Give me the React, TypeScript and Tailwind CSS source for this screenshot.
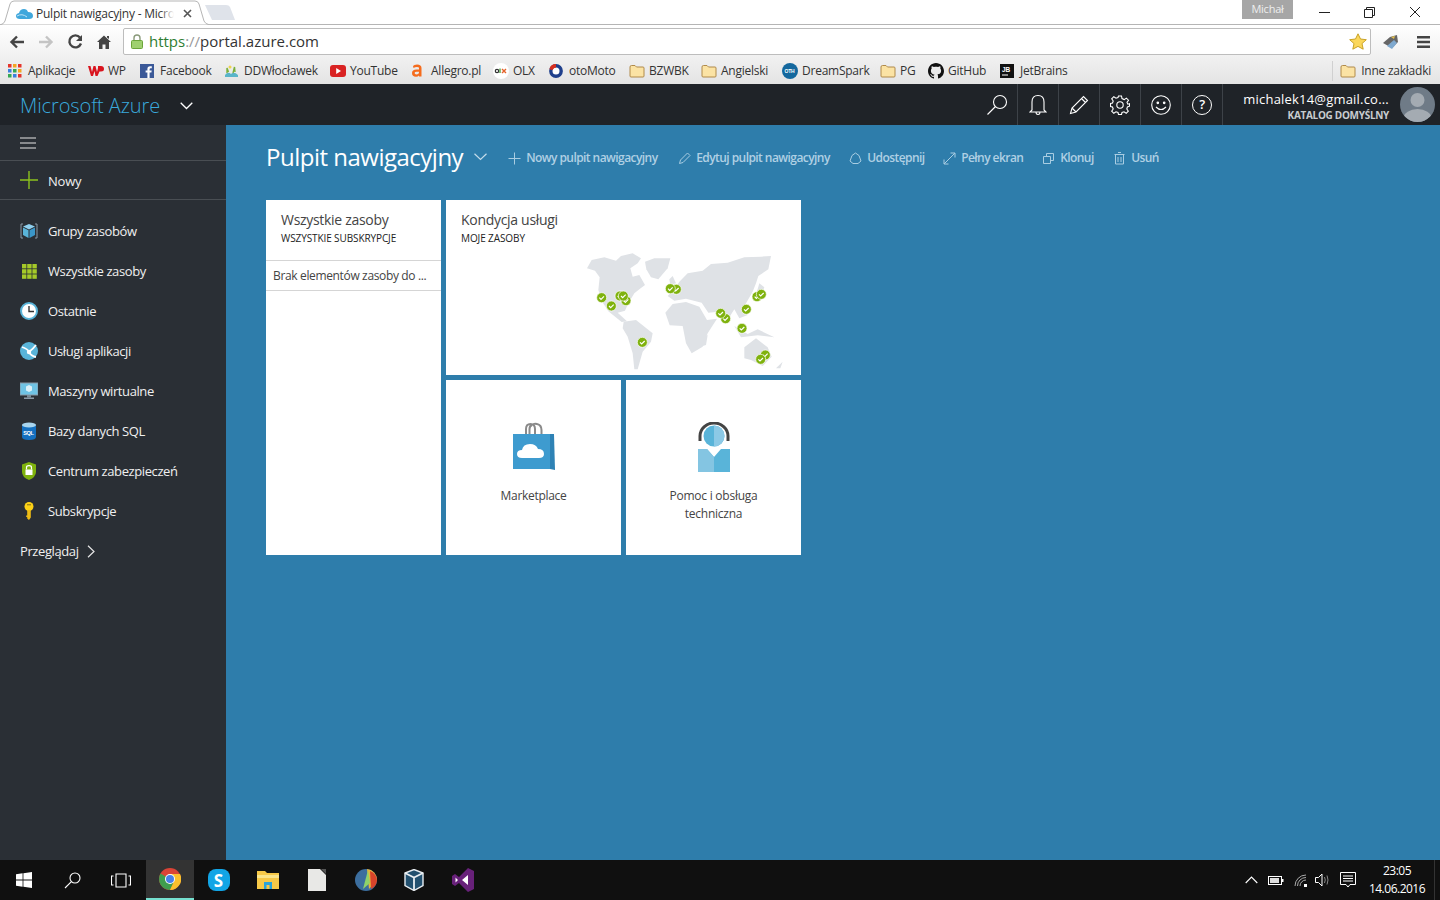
import React from "react";

const Folder = () => (
  <svg width="16" height="14" viewBox="0 0 16 14">
    <path d="M1 3 Q1 1.5 2.5 1.5 H6 L7.5 3 H14 Q15 3 15 4 V12 Q15 13 14 13 H2 Q1 13 1 12 Z" fill="#fbe3a4" stroke="#b08a4a" />
  </svg>
);

const AppsIcon = () => (
  <svg width="14" height="14" viewBox="0 0 14 14">
    {[
      [0, 0, "#e5352c"], [5, 0, "#f5a623"], [10, 0, "#e5352c"],
      [0, 5, "#3a7fe0"], [5, 5, "#34a853"], [10, 5, "#f5a623"],
      [0, 10, "#34a853"], [5, 10, "#3a7fe0"], [10, 10, "#e5352c"],
    ].map(([x, y, c]) => <rect key={`${x}-${y}`} x={x as number} y={y as number} width="3.5" height="3.5" fill={c as string} />)}
  </svg>
);

const bookmarks = [
  { label: "Aplikacje", w: "w-[80px]", icon: <AppsIcon /> },
  { label: "WP", w: "w-[52px]", icon: <svg width="16" height="12" viewBox="0 0 16 12"><path d="M0 1 L2.5 1 L4 7 L5.5 1 L7.5 1 L9 7 L10 3 L10 1 L13 1 Q16 1 16 4 Q16 6.5 13 6.5 L11.5 6.5 L9.5 11 L7.5 11 L6.5 6 L5 11 L3 11 Z" fill="#d9141e" /></svg> },
  { label: "Facebook", w: "w-[84px]", icon: <svg width="14" height="14" viewBox="0 0 14 14"><rect width="14" height="14" fill="#3b5998" /><path d="M9.6 14 V8.6 H11.4 L11.7 6.5 H9.6 V5.2 Q9.6 4.2 10.6 4.2 H11.8 V2.3 Q11 2.2 10.1 2.2 Q7.4 2.2 7.4 4.9 V6.5 H5.6 V8.6 H7.4 V14 Z" fill="#fff" /></svg> },
  { label: "DDWłocławek", w: "w-[106px]", icon: <svg width="15" height="14" viewBox="0 0 15 14"><path d="M1 11 Q4 7 7 10 Q10 7 14 11 L14 13 L1 13 Z" fill="#5ab5c9" /><path d="M3 9 L3 4 L4.5 8 M9 9 L10.5 3 L11 8" stroke="#7bb03a" strokeWidth="1.4" fill="none" /><circle cx="6" cy="3" r="1.5" fill="#f0d34a" /></svg> },
  { label: "YouTube", w: "w-[81px]", icon: <svg width="16" height="12" viewBox="0 0 16 12"><rect width="16" height="12" rx="3" fill="#d92323" /><path d="M6.2 3 L11 6 L6.2 9 Z" fill="#fff" /></svg> },
  { label: "Allegro.pl", w: "w-[82px]", icon: <svg width="12" height="15" viewBox="0 0 12 15"><path d="M2 3 Q3 1.5 6 1.5 Q10.5 1.5 10.5 5 V13.5 H8 V12.5 Q7 13.8 5 13.8 Q1 13.8 1 10 Q1 6.5 5.5 6.5 H8 V5 Q8 4 6 4 Q4 4 2.5 5 Z M8 8.8 H5.6 Q3.6 8.8 3.6 10 Q3.6 11.4 5.3 11.4 Q8 11.4 8 9.5 Z" fill="#f56c1d" /></svg> },
  { label: "OLX", w: "w-[56px]", icon: <svg width="16" height="16" viewBox="0 0 16 16"><circle cx="8" cy="8" r="8" fill="#fff" /><circle cx="4" cy="8" r="1.7" fill="none" stroke="#333" strokeWidth="1.2" /><path d="M7 5.5 V10" stroke="#4a9e3b" strokeWidth="1.3" /><path d="M9 6 L13 10 M13 6 L9 10" stroke="#e5622a" strokeWidth="1.4" /></svg> },
  { label: "otoMoto", w: "w-[80px]", icon: <svg width="14" height="14" viewBox="0 0 14 14"><circle cx="7" cy="7" r="5.2" fill="#fff" stroke="#20408c" strokeWidth="3.4" /><path d="M7 1.8 A5.2 5.2 0 0 0 2 5.6" fill="none" stroke="#d8301f" strokeWidth="3.4" /></svg> },
  { label: "BZWBK", w: "w-[72px]", icon: <Folder /> },
  { label: "Angielski", w: "w-[81px]", icon: <Folder /> },
  { label: "DreamSpark", w: "w-[98px]", icon: <svg width="16" height="16" viewBox="0 0 16 16"><circle cx="8" cy="8" r="8" fill="#14689e" /><text x="2.6" y="9.8" fontSize="5" fontWeight="700" fill="#fff" fontFamily="Liberation Sans">OTH</text></svg> },
  { label: "PG", w: "w-[48px]", icon: <Folder /> },
  { label: "GitHub", w: "w-[72px]", icon: <svg width="16" height="16" viewBox="0 0 16 16"><path fill="#111" d="M8 0C3.6 0 0 3.6 0 8c0 3.5 2.3 6.5 5.5 7.6.4.1.5-.2.5-.4v-1.4c-2.2.5-2.7-1-2.7-1-.4-.9-.9-1.2-.9-1.2-.7-.5.1-.5.1-.5.8.1 1.2.8 1.2.8.7 1.2 1.9.9 2.3.7.1-.5.3-.9.5-1.1-1.8-.2-3.6-.9-3.6-4 0-.9.3-1.6.8-2.1-.1-.2-.4-1 .1-2.1 0 0 .7-.2 2.2.8.6-.2 1.3-.3 2-.3s1.4.1 2 .3c1.5-1 2.2-.8 2.2-.8.4 1.1.2 1.9.1 2.1.5.6.8 1.3.8 2.1 0 3.1-1.9 3.7-3.7 3.9.3.3.6.8.6 1.5v2.2c0 .2.1.5.6.4C13.7 14.5 16 11.5 16 8c0-4.4-3.6-8-8-8z" /></svg> },
  { label: "JetBrains", w: "w-[90px]", icon: <svg width="14" height="14" viewBox="0 0 14 14"><rect width="14" height="14" fill="#111" /><text x="2" y="8" fontSize="6.5" fontWeight="700" fill="#fff" fontFamily="Liberation Sans">JB</text><rect x="2" y="10.5" width="6" height="1" fill="#fff" /></svg> },
];

const Check = ({ x, y }: { x: number; y: number }) => (
  <g>
    <circle cx={x} cy={y} r="15" fill="#7fb20e" stroke="#fff" strokeWidth="2" />
    <path d={`M${x - 7} ${y} L${x - 2} ${y + 5} L${x + 7} ${y - 4}`} fill="none" stroke="#fff" strokeWidth="3.5" />
  </g>
);

const pins: [number, number][] = [
  [92, 173], [121, 198], [147, 168], [165, 182], [157, 168], [316, 148], [298, 146],
  [464, 236], [449, 220], [513, 265], [526, 208], [558, 170], [571, 163], [214, 307], [583, 345], [569, 358],
];

const WorldMap = () => (
  <svg width="230" height="135" viewBox="0 0 690 405" className="self-end">
    <g fill="#dfe2e6">
      {/* north america */}
      <path d="M48 85 L62 60 L100 52 L135 62 L150 48 L185 40 L210 55 L200 70 L178 85 L185 110 L205 105 L222 135 L205 148 L190 160 L172 190 L162 212 L140 218 L168 244 L152 246 L112 214 L94 186 L82 150 L86 112 L72 92 Z" />
      {/* greenland */}
      <path d="M222 65 L250 55 L298 55 L290 85 L262 118 L240 112 L226 88 Z" />
      {/* south america */}
      <path d="M158 245 L195 240 L245 280 L240 305 L215 335 L200 388 L190 388 L185 340 L170 290 L155 265 Z" />
      {/* africa */}
      <path d="M283 218 L305 192 L345 186 L385 200 L408 240 L438 236 L410 280 L395 320 L362 340 L345 310 L335 258 L296 256 Z" />
      {/* eurasia */}
      <path d="M290 168 L308 150 L325 125 L350 100 L395 92 L420 72 L470 68 L520 52 L570 50 L600 48 L592 88 L562 108 L555 130 L545 155 L522 195 L530 225 L505 235 L490 208 L462 252 L442 215 L412 218 L392 188 L345 176 L310 182 Z" />
      <path d="M520 322 L555 295 L590 322 L602 350 L575 378 L540 360 L520 355 Z" />
      <path d="M400 290 L410 285 L405 315 L395 318 Z" />
      <path d="M490 258 L530 282 L560 268 L610 292 L560 286 L510 292 Z" />
      <path d="M565 130 L580 142 L565 180 L552 175 Z" />
      <path d="M295 118 L305 108 L315 130 L298 135 Z" />
      <path d="M615 385 L635 365 L628 385 Z" />
    </g>
    {pins.map(([x, y]) => <Check key={`${x}-${y}`} x={x} y={y} />)}
  </svg>
);

const cmdIcon = { fill: "none", stroke: "#a9cde2", strokeWidth: 1 } as const;

const commands = [
  { label: "Nowy pulpit nawigacyjny", w: "w-[170px]", icon: <path d="M6.5 0.5 V12.5 M0.5 6.5 H12.5" /> },
  { label: "Edytuj pulpit nawigacyjny", w: "w-[171px]", icon: <path d="M1.5 11.5 L2.5 8 L9.5 1 L12 3.5 L5 10.5 Z" /> },
  { label: "Udostępnij", w: "w-[94px]", icon: <path d="M6.5 1 L10 3.5 L12 9 L9 11.5 H4 L1 9 L3 3.5 Z" /> },
  { label: "Pełny ekran", w: "w-[99px]", icon: <path d="M1 12 L12 1 M7.5 1 H12 V5.5 M1 7.5 V12 H5.5" /> },
  { label: "Klonuj", w: "w-[71px]", icon: <path d="M1.5 4.5 H8.5 V11.5 H1.5 Z M4.5 4.5 V1.5 H11.5 V8.5 H8.5" /> },
  { label: "Usuń", w: "w-[50px]", icon: <path d="M2.5 2.5 H10.5 V12 H2.5 Z M1.5 2.5 H11.5 M5 0.5 H8 M5 5 V10 M8 5 V10" /> },
];

const menu = [
  {
    label: "Grupy zasobów",
    icon: (
      <svg width="18" height="16" viewBox="0 0 18 16">
        <path d="M3 1 H1 V15 H3 M15 1 H17 V15 H15" fill="none" stroke="#8a99a6" />
        <path d="M9 1 L15 3.5 L9 6.5 L3 3.5 Z" fill="#8fd0ef" />
        <path d="M3 4.5 L8.5 7.2 V15 L3 12 Z" fill="#59b4d9" />
        <path d="M15 4.5 L9.5 7.2 V15 L15 12 Z" fill="#3a96c8" />
      </svg>
    ),
  },
  {
    label: "Wszystkie zasoby",
    icon: (
      <svg width="15" height="15" viewBox="0 0 15 15" fill="#a5c929">
        {[0, 5.2, 10.4].flatMap((y) => [0, 5.2, 10.4].map((x) => <rect key={`${x}-${y}`} x={x} y={y} width="4.4" height="4.4" />))}
      </svg>
    ),
  },
  {
    label: "Ostatnie",
    icon: (
      <svg width="18" height="18" viewBox="0 0 18 18">
        <circle cx="9" cy="9" r="8" fill="#fff" stroke="#59b4d9" strokeWidth="2" />
        <path d="M9 4 V9.5 H14" fill="none" stroke="#333" strokeWidth="1.4" />
      </svg>
    ),
  },
  {
    label: "Usługi aplikacji",
    icon: (
      <svg width="18" height="18" viewBox="0 0 18 18">
        <circle cx="9" cy="9" r="9" fill="#59b4d9" />
        <path d="M2 5 Q8 7 9 10 Q11 14 16 15 M9 10 Q13 7 16 3" fill="none" stroke="#fff" strokeWidth="1.8" />
        <circle cx="9" cy="10" r="2.2" fill="#fff" />
      </svg>
    ),
  },
  {
    label: "Maszyny wirtualne",
    icon: (
      <svg width="18" height="18" viewBox="0 0 18 18">
        <rect x="0" y="1" width="18" height="12" fill="#6fc3e4" stroke="#8a99a6" />
        <path d="M9 3 L12 4.5 V8.5 L9 10 L6 8.5 V4.5 Z" fill="#fff" opacity="0.75" />
        <rect x="7" y="13" width="4" height="2.5" fill="#7a8a96" />
        <rect x="4" y="15.5" width="10" height="1.5" fill="#8a99a6" />
      </svg>
    ),
  },
  {
    label: "Bazy danych SQL",
    icon: (
      <svg width="14" height="18" viewBox="0 0 14 18">
        <path d="M0 3 V15 Q0 18 7 18 Q14 18 14 15 V3 Z" fill="#1470c0" />
        <ellipse cx="7" cy="3" rx="7" ry="2.6" fill="#a8d5ee" />
        <text x="1.2" y="12.5" fontSize="5.6" fontWeight="700" fill="#fff" fontFamily="Liberation Sans">SQL</text>
      </svg>
    ),
  },
  {
    label: "Centrum zabezpieczeń",
    icon: (
      <svg width="14" height="18" viewBox="0 0 14 18">
        <path d="M7 0 L14 2.5 V10 Q14 15 7 18 Q0 15 0 10 V2.5 Z" fill="#7fb20e" />
        <path d="M4.5 7.5 V5.5 Q4.5 3.7 7 3.7 Q9.5 3.7 9.5 5.5 V7.5" fill="none" stroke="#fff" strokeWidth="1.2" />
        <rect x="3.5" y="7.5" width="7" height="5.5" fill="#fff" />
      </svg>
    ),
  },
  {
    label: "Subskrypcje",
    icon: (
      <svg width="12" height="18" viewBox="0 0 12 18">
        <circle cx="6" cy="4.5" r="4.5" fill="#fcd116" />
        <path d="M4.2 8 H7.8 V15.5 L6 18 L4.2 16.5 V15 H3.2 V13.5 H4.2 Z" fill="#eebc14" />
        <rect x="4" y="2" width="4" height="1.4" fill="#a58a14" />
      </svg>
    ),
  },
];

const HeaderCell = ({ children }: { children: React.ReactNode }) => (
  <div className="flex h-full w-[41px] items-center justify-center border-r border-[#3d4248]">{children}</div>
);

const hdr = { fill: "none", stroke: "#fff", strokeWidth: 1.1 } as const;

const TaskCell = ({ children, width, active }: { children: React.ReactNode; width: string; active?: boolean }) => (
  <div className={`flex h-full items-center justify-center ${width} ${active ? "border-b-2 border-[#76e0d0] bg-[#333333]" : ""}`}>{children}</div>
);

export default function App() {
  return (
    <div className="flex h-[900px] w-[1440px] flex-col overflow-hidden bg-white font-['Open_Sans',sans-serif] text-[12px] tracking-[-0.02em]">
      {/* tab strip */}
      <div className="relative flex h-[25px] shrink-0 items-start justify-between border-b border-[#b5b5b5] bg-white">
        <div className="relative flex h-[25px] w-[236px]">
          <svg width="236" height="25" viewBox="0 0 236 25" className="absolute left-0 top-0">
            <path d="M205 5 H226 Q229 5 230 7 L235 20 H212 Z" fill="#dfe3ea" />
            <path d="M0 25 Q4 24 5 21 L10 4 Q11 1 14 1 H195 Q198 1 199 4 L204 21 Q205 24 210 25 Z" fill="#fff" stroke="#b5b5b5" />
          </svg>
          <div className="relative flex h-full w-full items-center pl-[16px] pt-[2px]">
            <svg width="17" height="12" viewBox="0 0 17 12" className="mr-[3px] shrink-0">
              <path d="M4 11 Q0 11 0 8 Q0 5.5 3 5 Q4 1 8 1 Q11 1 12 4 Q17 4 17 8 Q17 11 13 11 Z" fill="#3fa7dc" />
              <path d="M1 8 Q6 5 11 9" fill="none" stroke="#bfe3f5" />
            </svg>
            <span className="relative w-[138px] overflow-hidden whitespace-nowrap text-[#333]">
              Pulpit nawigacyjny - Micro
              <span className="absolute right-0 top-0 h-full w-[14px] bg-gradient-to-r from-transparent to-white" />
            </span>
            <svg width="9" height="9" viewBox="0 0 9 9" className="ml-[9px]">
              <path d="M1 1 L8 8 M8 1 L1 8" stroke="#555" strokeWidth="1.6" />
            </svg>
          </div>
        </div>
        <div className="flex items-start">
          <div className="mr-[8px] flex h-[19px] w-[51px] items-center justify-center bg-[#a6a6a6] text-[11px] text-[#eeeeee]">Michał</div>
          <div className="flex h-[24px] items-center">
            <div className="flex w-[46px] justify-center"><svg width="11" height="11" viewBox="0 0 11 11"><path d="M0 5.5 H11" stroke="#222" /></svg></div>
            <div className="flex w-[45px] justify-center"><svg width="11" height="11" viewBox="0 0 11 11"><path d="M0.5 2.5 H8.5 V10.5 H0.5 Z M2.5 2.5 V0.5 H10.5 V8.5 H8.5" fill="none" stroke="#222" /></svg></div>
            <div className="flex w-[46px] justify-center"><svg width="12" height="12" viewBox="0 0 12 12"><path d="M1 1 L11 11 M11 1 L1 11" stroke="#222" /></svg></div>
            <div className="w-[2px]" />
          </div>
        </div>
      </div>

      {/* toolbar */}
      <div className="flex h-[33px] shrink-0 items-center bg-gradient-to-b from-[#ffffff] to-[#f0f0f0] pl-[9px] pr-[10px]">
        <svg width="16" height="14" viewBox="0 0 16 14" className="mr-[13px]"><path d="M15 7 H3 M8 1.5 L2.5 7 L8 12.5" fill="none" stroke="#444" strokeWidth="2.4" /></svg>
        <svg width="16" height="14" viewBox="0 0 16 14" className="mr-[13px]"><path d="M1 7 H13 M8 1.5 L13.5 7 L8 12.5" fill="none" stroke="#c4c4c4" strokeWidth="2.4" /></svg>
        <svg width="16" height="16" viewBox="0 0 16 16" className="mr-[14px]"><path d="M13 3.5 A6 6 0 1 0 14 9.5" fill="none" stroke="#444" strokeWidth="2.4" /><path d="M15 1 V7 H9 Z" fill="#444" /></svg>
        <svg width="14" height="14" viewBox="0 0 14 14" className="mr-[12px]"><path d="M7 0.5 L14 7 H12 V14 H8.5 V9.5 H5.5 V14 H2 V7 H0 Z M10 1 H12 V4 L10 2.5 Z" fill="#444" /></svg>
        <div className="flex h-[27px] w-[1249px] items-center rounded-[2px] border border-[#bdbdbd] bg-white pl-[7px] pr-[3px]">
          <svg width="12" height="15" viewBox="0 0 12 15" className="mr-[6px]"><path d="M3 7 V4 Q3 1 6 1 Q9 1 9 4 V7" fill="none" stroke="#8a9a7a" strokeWidth="1.4" /><rect x="0.5" y="6.5" width="11" height="8" rx="1" fill="#9fd070" stroke="#6ba43a" /></svg>
          <span className="text-[15px] tracking-normal text-[#333]"><span className="text-[#2e7d32]">https</span><span className="text-[#999]">://</span>portal.azure.com</span>
          <svg width="18" height="17" viewBox="0 0 18 17" className="ml-auto"><path d="M9 0.8 L11.5 6 L17.3 6.7 L13 10.6 L14.2 16.2 L9 13.4 L3.8 16.2 L5 10.6 L0.7 6.7 L6.5 6 Z" fill="#fbd75b" stroke="#c9a227" /></svg>
        </div>
        <svg width="17" height="16" viewBox="0 0 17 16" className="ml-[11px]"><path d="M1 9 L8 3 L15 1 L16 8 L10 14 Z" fill="#666" /><path d="M5 12 L12 6 L15 9 L10 15 Z" fill="#7fa9cf" /><path d="M9 3 L13 2 L12 5 Z" fill="#e6c14d" /></svg>
        <svg width="13" height="12" viewBox="0 0 13 12" className="ml-[18px]"><path d="M0 0 H13 V2.6 H0 Z M0 4.7 H13 V7.3 H0 Z M0 9.4 H13 V12 H0 Z" fill="#444" /></svg>
      </div>

      {/* bookmarks */}
      <div className="flex h-[26px] shrink-0 items-center bg-gradient-to-b from-[#f0f0f0] to-[#e4e4e4] pb-[1px] pl-[8px] text-[#333]">
        {bookmarks.map((b) => (
          <div key={b.label} className={`flex shrink-0 items-center ${b.w}`}>
            <div className="flex w-[20px] shrink-0 items-center justify-start">{b.icon}</div>
            <span className="whitespace-nowrap">{b.label}</span>
          </div>
        ))}
        <div className="ml-auto flex h-[20px] items-center border-l border-[#d0d0d0] pl-[7px] pr-[9px]">
          <div className="mr-[5px]"><Folder /></div>
          <span className="whitespace-nowrap">Inne zakładki</span>
        </div>
      </div>

      {/* azure header */}
      <div className="flex h-[41px] shrink-0 items-center justify-between bg-[#1f2328]">
        <div className="flex items-center pl-[20px] pt-[2px]">
          <span className="w-[160px] text-[20px] font-light tracking-[-0.1px] text-[#3aa9dc]">Microsoft Azure</span>
          <svg width="13" height="8" viewBox="0 0 13 8"><path d="M0.7 0.7 L6.5 6.5 L12.3 0.7" fill="none" stroke="#fff" strokeWidth="1.3" /></svg>
        </div>
        <div className="flex h-full items-center">
          <HeaderCell>
            <svg width="22" height="22" viewBox="0 0 22 22" {...hdr}><circle cx="14" cy="8" r="6.5" /><path d="M9.5 12.5 L1.5 20.5" /></svg>
          </HeaderCell>
          <HeaderCell>
            <svg width="18" height="22" viewBox="0 0 18 22" {...hdr}><path d="M3 16 V8 Q3 1.5 9 1.5 Q15 1.5 15 8 V16 L17 18 H1 Z M7 18 Q7 20.5 9 20.5 Q11 20.5 11 18" /></svg>
          </HeaderCell>
          <HeaderCell>
            <svg width="20" height="20" viewBox="0 0 20 20" {...hdr}><path d="M1.5 18.5 L3 13 L14.5 1.5 L18.5 5.5 L7 17 Z M12.5 3.5 L16.5 7.5 M3 13 L7 17" /></svg>
          </HeaderCell>
          <HeaderCell>
            <svg width="20" height="20" viewBox="0 0 20 20" {...hdr}><circle cx="10" cy="10" r="3.2" /><path d="M8.5 1 H11.5 L12 3.6 L14.2 4.6 L16.4 3.1 L18.5 5.2 L17 7.4 L17.8 9.2 L19.5 8.8 V11.2 L17.4 12 L16.8 14 L18.3 16.2 L16.2 18.3 L14 16.8 L12 17.5 L11.5 19.5 H8.5 L8 17.5 L6 16.8 L3.8 18.3 L1.7 16.2 L3.2 14 L2.5 12 L0.5 11.5 V8.5 L2.5 8 L3.2 6 L1.7 3.8 L3.8 1.7 L6 3.2 L8 2.5 Z" /></svg>
          </HeaderCell>
          <HeaderCell>
            <svg width="20" height="20" viewBox="0 0 20 20" {...hdr}><circle cx="10" cy="10" r="9.3" /><circle cx="6.8" cy="7.8" r="0.8" fill="#fff" /><circle cx="13.2" cy="7.8" r="0.8" fill="#fff" /><path d="M5 12 Q10 17 15 12" /></svg>
          </HeaderCell>
          <HeaderCell>
            <div className="flex h-[20px] w-[20px] items-center justify-center rounded-full border border-white text-[13px] font-semibold leading-none text-white">?</div>
          </HeaderCell>
          <div className="flex h-full w-[217px] items-center justify-end pr-[5px]">
            <div className="mr-[11px] flex flex-col items-end pt-[4px]">
              <span className="text-[13px] leading-[16px] tracking-[0.2px] text-white">michalek14@gmail.co...</span>
              <span className="text-[10px] font-bold leading-[16px] tracking-[-0.3px] text-[#c8ccd0]">KATALOG DOMYŚLNY</span>
            </div>
            <svg width="35" height="35" viewBox="0 0 35 35">
              <clipPath id="avatar"><circle cx="17.5" cy="17.5" r="17.5" /></clipPath>
              <g clipPath="url(#avatar)">
                <rect width="35" height="35" fill="#6f7b87" />
                <circle cx="17.5" cy="13" r="7" fill="#a4abb2" />
                <ellipse cx="17.5" cy="31" rx="14" ry="9" fill="#a4abb2" />
              </g>
            </svg>
          </div>
        </div>
      </div>

      {/* portal body */}
      <div className="flex min-h-0 flex-1">
        <aside className="flex w-[226px] shrink-0 flex-col bg-[#2a2f35] text-[13px] tracking-[-0.4px] text-[#f0f0f0]">
          <div className="flex h-[36px] items-center border-b border-[#494e53] pl-[20px]">
            <svg width="16" height="12" viewBox="0 0 16 12"><path d="M0 1 H16 M0 6 H16 M0 11 H16" stroke="#e6e6e6" /></svg>
          </div>
          <div className="flex h-[39px] items-center border-b border-[#494e53] pl-[20px]">
            <svg width="18" height="18" viewBox="0 0 18 18" className="mr-[10px]"><path d="M9 0 V18 M0 9 H18" stroke="#8cc21e" strokeWidth="1.4" /></svg>
            <span className="pt-[4px] tracking-[-0.2px]">Nowy</span>
          </div>
          <nav className="flex flex-col pt-[11px]">
            {menu.map((m) => (
              <div key={m.label} className="flex h-[40px] items-center">
                <div className="flex w-[48px] shrink-0 items-center justify-center pl-[10px]">{m.icon}</div>
                <span className="whitespace-nowrap pt-[2px]">{m.label}</span>
              </div>
            ))}
            <div className="flex h-[40px] items-center pl-[20px]">
              <span className="pt-[2px]">Przeglądaj</span>
              <svg width="8" height="13" viewBox="0 0 8 13" className="ml-[8px] mt-[1px]"><path d="M1 0.7 L7 6.5 L1 12.3" fill="none" stroke="#e6e6e6" strokeWidth="1.2" /></svg>
            </div>
          </nav>
        </aside>

        <main className="min-w-0 flex-1 bg-[#2e7dab] pl-[40px]">
          <div className="flex h-[75px] items-start pt-[14px]">
            <h1 className="text-[24px] font-normal leading-[36px] tracking-[-0.5px] text-white">Pulpit nawigacyjny</h1>
            <svg width="13" height="8" viewBox="0 0 13 8" className="ml-[11px] mt-[14px]"><path d="M0.5 0.7 L6.5 6.5 L12.5 0.7" fill="none" stroke="#c4dcea" strokeWidth="1.2" /></svg>
            <div className="ml-[21px] flex h-[37px] items-center pt-[1px]">
              {commands.map((c) => (
                <div key={c.label} className={`flex shrink-0 items-center ${c.w}`}>
                  <svg width="13" height="13" viewBox="0 0 13 13" {...cmdIcon} className="mr-[5px] shrink-0">{c.icon}</svg>
                  <span className="whitespace-nowrap font-semibold tracking-[-0.56px] text-[#b0d0e4]">{c.label}</span>
                </div>
              ))}
            </div>
          </div>

          <div className="grid grid-cols-[175px_175px_175px] grid-rows-[175px_175px] gap-[5px] text-[#444]">
            <section className="row-span-2 flex flex-col bg-white">
              <div className="flex h-[61px] flex-col border-b border-[#d5d5d5] pl-[15px] pt-[11px]">
                <span className="text-[14px] leading-[18px] tracking-[-0.3px]">Wszystkie zasoby</span>
                <span className="mt-[2px] text-[10px] font-medium leading-[14px] tracking-[-0.1px] text-[#222]">WSZYSTKIE SUBSKRYPCJE</span>
              </div>
              <div className="flex h-[30px] items-center border-b border-[#d5d5d5] pl-[7px] text-[12px] tracking-[-0.35px]">Brak elementów zasoby do ...</div>
            </section>
            <section className="col-span-2 flex flex-col bg-white">
              <div className="flex h-[40px] flex-col pl-[15px] pt-[11px]">
                <span className="text-[14px] leading-[18px] tracking-[-0.3px]">Kondycja usługi</span>
                <span className="mt-[2px] text-[10px] font-medium leading-[14px] tracking-[-0.1px] text-[#222]">MOJE ZASOBY</span>
              </div>
              <WorldMap />
            </section>
            <section className="flex flex-col items-center bg-white pt-[42px]">
              <svg width="44" height="50" viewBox="0 0 44 50">
                <path d="M14 16 V7 Q14 2 18.5 2 Q23 2 23 7 V16 M20 3 Q22 1 25 2 Q29.5 3 29.5 8 V16 M17.5 16 V7 Q17.5 4 20 3" fill="none" stroke="#8a8a8a" strokeWidth="2" />
                <path d="M1 12 H38 L38 47 L1 47 Z" fill="#3e9bcf" />
                <path d="M38 12 L42 12 L43 48 L38 47 Z" fill="#2e82b5" />
                <path d="M10 36 Q5 36 5 32 Q5 28 10 28 Q11 22 18 22 Q24 22 26 27 Q32 27 32 32 Q32 36 27 36 Z" fill="#fff" />
              </svg>
              <span className="mt-[15px] text-[12px] leading-[18px] tracking-[-0.3px]">Marketplace</span>
            </section>
            <section className="flex flex-col items-center bg-white pt-[42px] text-center">
              <svg width="34" height="50" viewBox="0 0 34 50">
                <path d="M3 19 V14 A14 13 0 0 1 31 14 V19" fill="none" stroke="#444" strokeWidth="3" />
                <circle cx="17" cy="14" r="10.5" fill="#59b4d9" />
                <path d="M17 3.5 A10.5 10.5 0 0 1 17 24.5 Z" fill="#8cc9e6" />
                <path d="M1 27 H10 L17 35 L24 27 H33 V50 H1 Z" fill="#59b4d9" />
                <path d="M1 27 H10 L17 35 V50 H1 Z" fill="#84c5e2" />
              </svg>
              <span className="mt-[15px] text-[12px] leading-[18px]">Pomoc i obsługa<br />techniczna</span>
            </section>
          </div>
        </main>
      </div>

      {/* taskbar */}
      <div className="flex h-[40px] shrink-0 items-center justify-between bg-[#101010] text-white">
        <div className="flex h-full items-center">
          <TaskCell width="w-[48px]">
            <svg width="16" height="16" viewBox="0 0 16 16" fill="#fff"><path d="M0 2.2 L6.6 1.3 V7.5 H0 Z M7.4 1.2 L16 0 V7.5 H7.4 Z M0 8.4 H6.6 V14.7 L0 13.8 Z M7.4 8.4 H16 V16 L7.4 14.8 Z" /></svg>
          </TaskCell>
          <TaskCell width="w-[48px]">
            <svg width="17" height="17" viewBox="0 0 17 17" fill="none" stroke="#fff" strokeWidth="1.1"><circle cx="11" cy="6" r="5" /><path d="M7.4 9.6 L1 16" /></svg>
          </TaskCell>
          <TaskCell width="w-[50px]">
            <svg width="20" height="15" viewBox="0 0 20 15" fill="none" stroke="#fff" strokeWidth="1.1"><path d="M5 1 H15 V14 H5 Z M2.5 3 H0.5 V12 H2.5 M17.5 3 H19.5 V12 H17.5" /></svg>
          </TaskCell>
          <TaskCell width="w-[48px]" active>
            <svg width="22" height="22" viewBox="0 0 22 22">
              <circle cx="11" cy="11" r="11" fill="#db4437" />
              <path d="M11 11 L1.5 5.5 A11 11 0 0 0 11 22 L16.5 11 Z" fill="#3f9e4e" />
              <path d="M11 6 H21 A11 11 0 0 1 11 22 L16 11 Z" fill="#fbc02d" />
              <circle cx="11" cy="11" r="5" fill="#fff" />
              <circle cx="11" cy="11" r="4" fill="#4a80e8" />
            </svg>
          </TaskCell>
          <TaskCell width="w-[49px]">
            <div className="flex h-[22px] w-[22px] items-center justify-center rounded-[8px] bg-[#12a5e6] text-[17px] font-bold leading-none tracking-normal text-white">S</div>
          </TaskCell>
          <TaskCell width="w-[49px]">
            <svg width="22" height="20" viewBox="0 0 22 20">
              <path d="M0 1 H8 L10 3 H22 V19 H0 Z" fill="#f7c948" />
              <rect x="0" y="5" width="22" height="3" fill="#fbe58a" />
              <path d="M7 12 H15 V19 H12.5 V15 H9.5 V19 H7 Z" fill="#2aa3db" />
            </svg>
          </TaskCell>
          <TaskCell width="w-[49px]">
            <svg width="18" height="22" viewBox="0 0 18 22">
              <path d="M0 0 H12 L18 6 V22 H0 Z" fill="#e8e8e6" />
              <path d="M13 0 L18 5 V0 Z" fill="#555" />
            </svg>
          </TaskCell>
          <TaskCell width="w-[49px]">
            <svg width="22" height="22" viewBox="0 0 22 22">
              <circle cx="11" cy="11" r="11" fill="#3c6e9e" />
              <path d="M12 0 A11 11 0 0 1 22 11 L14 20 Z" fill="#e8b53a" />
              <path d="M15 2 A11 11 0 0 1 22 12 A11 11 0 0 1 16 20 Z" fill="#d8432a" />
              <path d="M8 20 L13 1 L15 14 Z" fill="#8fd16a" />
            </svg>
          </TaskCell>
          <TaskCell width="w-[47px]">
            <svg width="20" height="22" viewBox="0 0 20 22">
              <path d="M10 0.5 L19 4 V16.5 L10 21.5 L1 16.5 V4 Z" fill="#22506f" stroke="#e9eef2" strokeWidth="1.4" />
              <path d="M1 4 L10 8.5 L19 4 M10 8.5 V21" fill="none" stroke="#e9eef2" strokeWidth="1.8" />
            </svg>
          </TaskCell>
          <TaskCell width="w-[51px]">
            <svg width="22" height="24" viewBox="0 0 22 24">
              <path d="M16 0 L22 3 V21 L16 24 L7 15 L3 18 L0 16 V8 L3 6 L7 9 Z" fill="#68217a" />
              <path d="M16 7 L10 12 L16 17 Z M3.5 9.5 V14.5 L6 12 Z" fill="#fff" />
            </svg>
          </TaskCell>
        </div>
        <div className="flex h-full items-center pr-[5px]">
          <svg width="13" height="8" viewBox="0 0 13 8" className="mr-[10px]"><path d="M0.7 7 L6.5 1 L12.3 7" fill="none" stroke="#fff" strokeWidth="1.1" /></svg>
          <svg width="16" height="9" viewBox="0 0 16 9" className="mr-[10px]"><rect x="0.5" y="0.5" width="13" height="8" fill="none" stroke="#fff" /><rect x="2" y="2" width="9" height="5" fill="#ddd" /><rect x="14" y="3" width="1.5" height="3" fill="#fff" /></svg>
          <svg width="14" height="13" viewBox="0 0 14 13" fill="none" stroke="#aaa" className="mr-[7px]"><path d="M1 12 A11 11 0 0 1 12 1 M3.5 12 A8.5 8.5 0 0 1 12 3.5 M6 12 A6 6 0 0 1 12 6" /><rect x="10" y="10" width="3" height="3" fill="#fff" stroke="none" /></svg>
          <svg width="16" height="14" viewBox="0 0 16 14" fill="none" stroke="#fff" className="mr-[9px]"><path d="M0.5 4.5 H3.5 L7 1 V13 L3.5 9.5 H0.5 Z" /><path d="M9.5 4 Q11 7 9.5 10 M12 2.5 Q14 7 12 11.5" stroke="#888" /></svg>
          <svg width="16" height="16" viewBox="0 0 16 16" fill="none" stroke="#fff"><path d="M0.5 0.5 H15.5 V12.5 H10 L8 15 L6 12.5 H0.5 Z M3 4 H13 M3 6.5 H13 M3 9 H13" /></svg>
          <div className="ml-[8px] flex w-[66px] flex-col items-center text-[12px] leading-[18px] tracking-[-0.5px]">
            <span>23:05</span>
            <span>14.06.2016</span>
          </div>
          <div className="ml-[4px] h-full w-[1px] bg-[#333]" />
        </div>
      </div>
    </div>
  );
}
